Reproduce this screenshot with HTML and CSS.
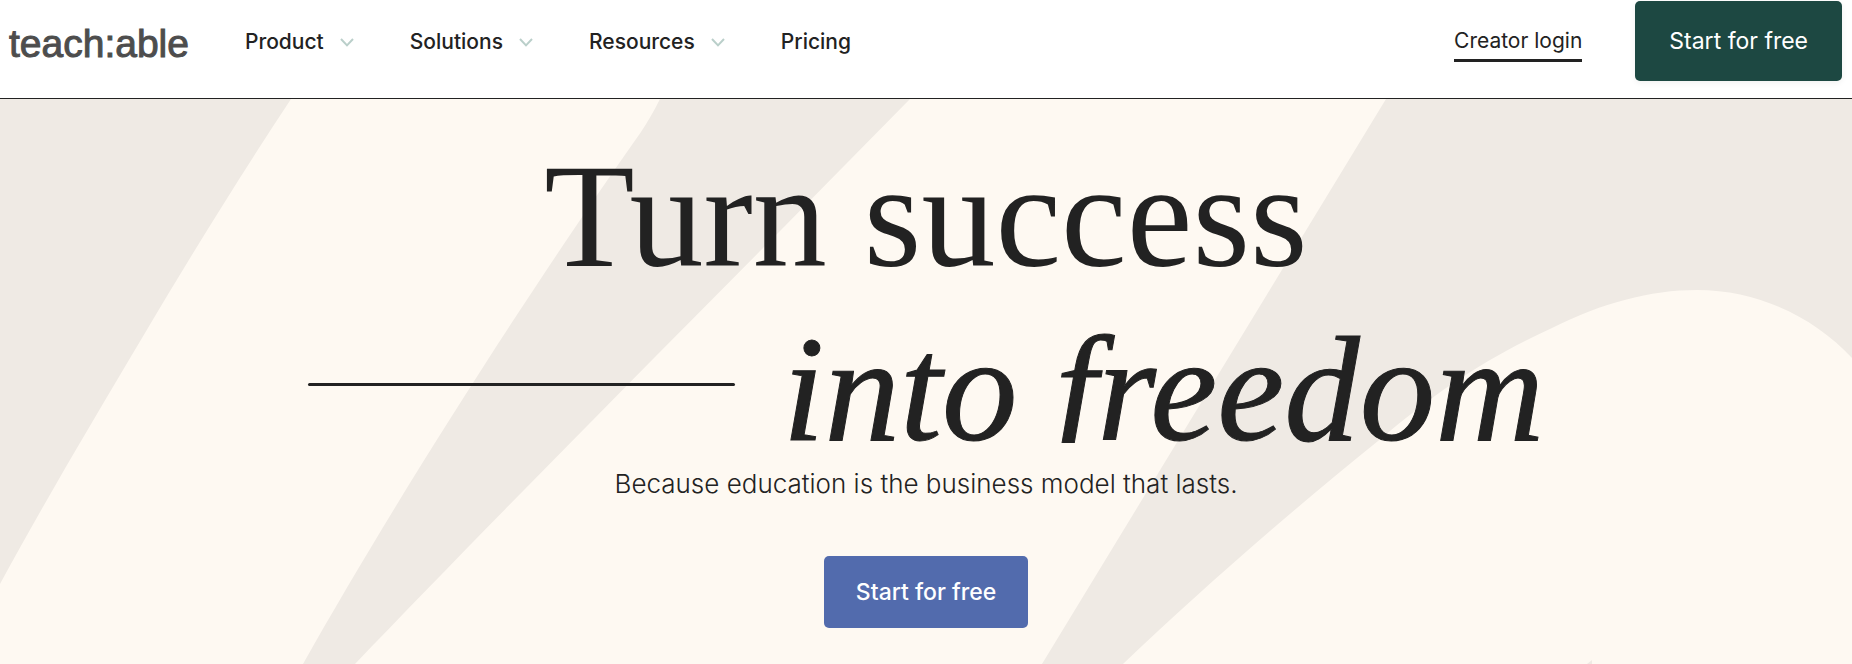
FILE: index.html
```html
<!DOCTYPE html>
<html lang="en">
<head>
<meta charset="utf-8">
<meta name="viewport" content="width=device-width, initial-scale=1">
<title>teach:able</title>
<link rel="stylesheet" href="styles.css">
</head>
<body>
<header class="header">
  <a class="logo" href="#">teach:able</a>
  <nav class="nav" aria-label="Main">
    <button class="nav-item" type="button">Product
      <svg class="chevron" viewBox="0 0 14 9" aria-hidden="true"><path d="M1 1l6 6.4L13 1"/></svg>
    </button>
    <button class="nav-item" type="button">Solutions
      <svg class="chevron" viewBox="0 0 14 9" aria-hidden="true"><path d="M1 1l6 6.4L13 1"/></svg>
    </button>
    <button class="nav-item" type="button">Resources
      <svg class="chevron" viewBox="0 0 14 9" aria-hidden="true"><path d="M1 1l6 6.4L13 1"/></svg>
    </button>
    <a class="nav-item" href="#">Pricing</a>
  </nav>
  <a class="login" href="#">Creator login</a>
  <a class="button button-green" href="#">Start for free</a>
</header>
<main class="hero">
  <svg class="hero-art" viewBox="0 99 1852 565" preserveAspectRatio="xMidYMin slice" aria-hidden="true">
    <path d="M0 99H291C240 176 190 257 145 333C92 422 40 510 0 584Z"/>
    <path d="M660 99C654 111 648 121 641 132C560 246 414 467 303 664H355C467 547 626 386 780 231L910 99Z"/>
    <path d="M1386 99L1042 664H1123C1200 591 1285 516 1378 441C1440 389 1485 359 1552 328C1602 303 1650 290 1697 290C1760 290 1816 319 1852 358V99Z"/>
    <path d="M1592 660L1587 664H1592Z"/>
  </svg>
  <h1 class="title">
    <span class="title-row">Turn success</span>
    <span class="title-row"><span class="rule"></span><em class="title-em">into freedom</em></span>
  </h1>
  <p class="subtitle">Because education is the business model that lasts.</p>
  <a class="button button-blue" href="#">Start for free</a>
</main>
</body>
</html>
```
FILE: styles.css
```css
* {
  box-sizing: border-box;
}

body {
  margin: 0;
  min-height: 100vh;
  display: flex;
  flex-direction: column;
  background: #fff;
  color: #222;
  font-family: Inter, "Liberation Sans", sans-serif;
}

a {
  color: inherit;
  text-decoration: none;
}

.header {
  display: flex;
  align-items: center;
  padding: 1px 10px 17px 9px;
  border-bottom: 1px solid #222;
}

.logo {
  margin-right: 56px;
  padding-top: 6px;
  color: #4d4d4d;
  font-family: "Liberation Sans", Arial, sans-serif;
  font-size: 39px;
  line-height: 48px;
  -webkit-text-stroke: 1px #4d4d4d;
}

.nav {
  display: flex;
  gap: 56px;
  margin-right: auto;
  padding-top: 2px;
}

.nav-item {
  display: flex;
  align-items: center;
  gap: 16px;
  padding: 0;
  border: 0;
  background: none;
  color: #222;
  font: 500 21px/28px Inter, "Liberation Sans", sans-serif;
  cursor: pointer;
}

.chevron {
  width: 14px;
  height: 9px;
  fill: none;
  stroke: #bacfca;
  stroke-width: 2;
}

.login {
  margin-right: 53px;
  padding: 6px 0 4px;
  border-bottom: 3px solid #222;
  font-size: 21px;
  line-height: 28px;
}

.button {
  display: flex;
  align-items: center;
  justify-content: center;
  border-radius: 5px;
  color: #fff;
  font-size: 23px;
  line-height: 32px;
}

.button-green {
  padding: 24px 34px;
  background: #1d4842;
  box-shadow: 0 2px 6px rgba(0, 0, 0, 0.06);
}

.button-blue {
  margin-top: 57px;
  padding: 20px 32px;
  background: #526bad;
  font-weight: 500;
}

.hero {
  position: relative;
  flex: 1;
  display: flex;
  flex-direction: column;
  align-items: center;
  padding: 37px 24px 32px;
  overflow: hidden;
  background: #fef9f2;
}

.hero-art {
  position: absolute;
  inset: 0;
  width: 100%;
  height: 100%;
  fill: #efeae4;
}

.title,
.subtitle,
.button-blue {
  z-index: 1;
}

.title {
  display: flex;
  flex-direction: column;
  align-items: center;
  gap: 13px;
  margin: 0;
  font: 400 148px/160px "Liberation Serif", "Times New Roman", serif;
}

.title-row {
  display: flex;
  align-items: center;
  gap: 48px;
}

/* The italic f stands on the baseline, without its tail. */
.title-em {
  font-size: 151px;
  clip-path: inset(-10px -10px 26px);
  -webkit-text-stroke: 1px #222;
}

.rule {
  width: 427px;
  height: 3px;
  margin-bottom: 10px;
  border-radius: 2px;
  background: #222;
}

.subtitle {
  margin: 0;
  font-size: 26px;
  font-weight: 300;
  line-height: 30px;
}
```
